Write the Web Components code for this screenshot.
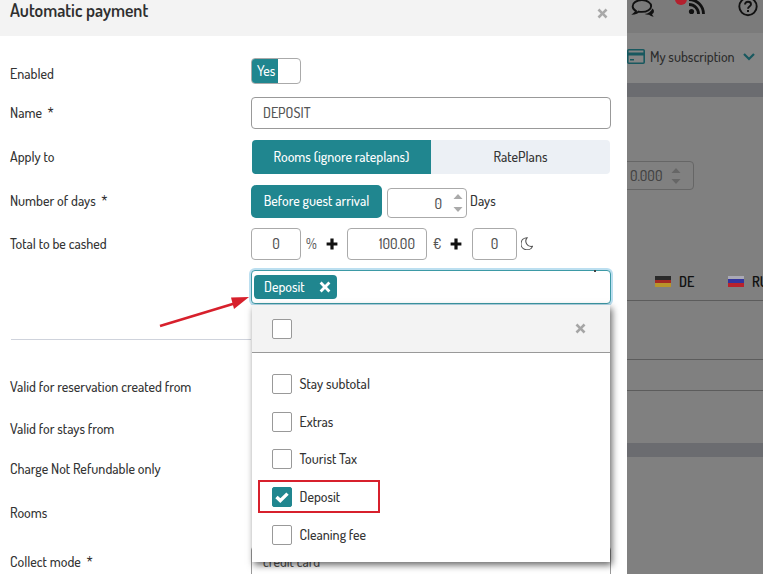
<!DOCTYPE html>
<html><head><meta charset="utf-8">
<style>
html,body{margin:0;padding:0;width:763px;height:574px;overflow:hidden}
body{font-family:"Dosis","Lato",sans-serif;font-size:14px;font-weight:500;color:#333;display:flex;background:#808080}
svg{display:block}
</style></head><body>
<pay-modal>
<pay-row style="margin-top:22px;height:24px;--lo:7px" label="Enabled"><pay-switch></pay-switch></pay-row>
<pay-row style="margin-top:15px;height:32px" label="Name" req><pay-field grow value="DEPOSIT"></pay-field></pay-row>
<pay-row style="margin-top:11px;height:34px" label="Apply to"><pay-seg></pay-seg></pay-row>
<pay-row style="margin-top:11px;height:33px" label="Number of days" req><pay-days></pay-days></pay-row>
<pay-row style="margin-top:10px;height:32px" label="Total to be cashed"><pay-total></pay-total></pay-row>
<pay-row style="margin-top:10px;height:34px"><pay-multi></pay-multi></pay-row>
<pay-rule></pay-rule>
<pay-row style="margin-top:37px;height:20px" label="Valid for reservation created from"></pay-row>
<pay-row style="margin-top:22px;height:20px" label="Valid for stays from"></pay-row>
<pay-row style="margin-top:20px;height:20px" label="Charge Not Refundable only"></pay-row>
<pay-row style="margin-top:24px;height:20px" label="Rooms"></pay-row>
<pay-row style="margin-top:23px;height:32px" label="Collect mode" req><pay-field grow value="credit card"></pay-field></pay-row>
<pay-notes></pay-notes>
</pay-modal>
<pay-back></pay-back>
<script>
function def(name,css,html){
  customElements.define(name,class extends HTMLElement{
    constructor(){super();const r=this.attachShadow({mode:'open'});
      r.innerHTML='<style>'+css+'</style>'+(typeof html==='function'?html(this):html);}
  });
}
const X='<svg viewBox="0 0 12 12" width="W" height="W"><path d="M2.6 .6 6 4 9.4 .6 11.4 2.600 8 6 11.400 9.400 9.400 11.400 6 8 2.600 11.400 .6 9.400 4 6 .6 2.600z" fill="C"/></svg>';
const xi=(w,c)=>X.replace(/W/g,w).replace('C',c);
const PLUS='<svg viewBox="0 0 12 12" width="12" height="12"><path d="M4.4 .6h3.2v3.800h3.800v3.200H7.600v3.800H4.400V7.600H.6V4.400h3.800z" fill="#111"/></svg>';

def('pay-modal',`:host{display:flex;flex-direction:column;width:627px;height:574px;flex:none;background:#fff;position:relative;overflow:hidden}
header{height:36px;flex:none;background:#f3f3f3;display:flex;justify-content:space-between;align-items:flex-start;padding:0 19px 0 10px;box-sizing:border-box}
h1{margin:0;font-size:17.700px;line-height:21px;font-weight:600;color:#2f2f2f}
span{margin-top:5px}`,
`<header><h1>Automatic payment</h1><span>${xi(11,'#a9a9a9')}</span></header><slot></slot>`);

def('pay-row',`:host{display:grid;grid-template-columns:241px 360px;padding-left:10px;align-items:center;flex:none;position:relative}
.l{white-space:pre;padding-top:var(--lo,0);padding-bottom:2px}.f{display:flex;height:100%;align-items:stretch;position:relative}`,
el=>`<div class="l">${el.getAttribute('label')||''}${el.hasAttribute('req')?'  *':''}</div><div class="f"><slot></slot></div>`);

def('pay-switch',`:host{display:flex;width:50px;box-sizing:border-box;border:1px solid #aaa;border-radius:4px;overflow:hidden;background:#fff}
b{font-weight:500;width:26px;background:#20868f;color:#fff;line-height:23px;padding-left:5px;box-sizing:border-box}`,`<b>Yes</b>`);

def('pay-field',`:host{display:flex;align-items:center;box-sizing:border-box;border:1px solid #999;border-radius:4px;padding:0 11px 2px;color:#555;background:#fff;flex:1}`,
el=>el.getAttribute('value')||'');

def('pay-seg',`:host{display:flex;flex:1;margin:0 1px;border-radius:4px;overflow:hidden;background:#ecf0f5}
div{display:flex;align-items:center;justify-content:center;padding-bottom:2px}
.a{width:179px;background:#20868f;color:#fff}.b{flex:1;color:#333}`,`<div class="a">Rooms (ignore rateplans)</div><div class="b">RatePlans</div>`);

def('pay-days',`:host{display:flex;flex:1;align-items:flex-start}
.btn{height:33px;width:131px;box-sizing:border-box;padding-bottom:2px;background:#20868f;color:#fff;border-radius:5px;display:flex;align-items:center;justify-content:center}
.n{margin:3px 0 0 5px;height:30px;width:80px;box-sizing:border-box;border:1px solid #aaa;border-radius:4px;display:flex;align-items:center;justify-content:flex-end;color:#555;padding-right:3px;gap:11px}
.d{margin:3px 0 0 3px;line-height:26px}`,
`<div class="btn">Before guest arrival</div><div class="n">0<svg width="10" height="22" viewBox="0 0 10 22"><path d="M5 2 9.500 7H.5z" fill="#aaa"/><path d="M5 20 .5 15h9z" fill="#aaa"/></svg></div><div class="d">Days</div>`);

def('pay-total',`:host{display:flex;flex:1;align-items:center;color:#555}
.i{height:32px;box-sizing:border-box;border:1px solid #aaa;border-radius:4px;display:flex;align-items:center;background:#fff;flex:none;padding-bottom:2px}
.c{justify-content:center}.r{justify-content:flex-end;padding-right:11px}
.u{flex:none;padding-bottom:2px}.p{flex:none;width:12px}`,
`<div class="i c" style="width:50px">0</div><span class="u" style="margin-left:5px;width:20px">%</span><span class="p" style="margin-right:9px">${PLUS}</span><div class="i r" style="width:80px">100.00</div><span class="u" style="margin-left:6px;width:17px">€</span><span class="p" style="margin-right:10px">${PLUS}</span><div class="i c" style="width:45px">0</div><span style="margin-left:4px"><svg width="12" height="13" viewBox="0 0 12 13"><path d="M6 .8A6 6 0 1 0 11.400 9.400 5.400 5.400 0 0 1 6 .8z" fill="none" stroke="#555" stroke-width="1.100"/></svg></span>`);

def('pay-multi',`:host{display:flex;flex:1;box-sizing:border-box;border:1px solid #3d9aa6;border-radius:4px;box-shadow:0 0 0 2px #bcdff0;background:#fff;align-items:center;padding-left:2px;position:relative}
.chip{height:24px;width:83px;box-sizing:border-box;background:#20868f;color:#fff;border-radius:4px;display:flex;align-items:center;justify-content:space-between;padding:0 6px 0 10px}
.chip span{padding-bottom:2px}
.dot{position:absolute;right:14px;top:-1px;width:2px;height:2px;background:#444}
.drop{position:absolute;left:0;top:34px;width:358px;height:257px;background:#fff;box-shadow:2px 3px 7px rgba(0,0,0,.6);display:flex;flex-direction:column;z-index:2}
.top{height:47px;flex:none;background:#f3f3f3;border-bottom:1px solid #999;display:flex;align-items:center;justify-content:space-between;padding:0 24px 0 20px}
.list{padding-top:12px}`,
`<div class="chip"><span>Deposit</span>${xi(12,'#fff')}</div><div class="dot"></div>
<div class="drop"><div class="top"><pay-check></pay-check>${xi(11,'#a5a5a5')}</div>
<div class="list"><pay-item>Stay subtotal</pay-item><pay-item>Extras</pay-item><pay-item>Tourist Tax</pay-item><pay-item checked>Deposit</pay-item><pay-item>Cleaning fee</pay-item></div></div>`);

def('pay-check',`:host{display:block;width:20px;height:20px;box-sizing:border-box;border:1px solid #999;border-radius:2px;background:#fff;flex:none}
:host([checked]){background:#20868f;border-color:#20868f}`,
el=>el.hasAttribute('checked')?`<svg width="18" height="18" viewBox="0 0 18 18"><path d="M3.500 9 7.300 12.600 14.500 5.600" fill="none" stroke="#fff" stroke-width="3.400"/></svg>`:'');

def('pay-item',`:host{display:flex;height:37.750px;align-items:center;gap:7.500px;padding-left:20px;color:#333}
span{padding-bottom:1px}`,
el=>`<pay-check ${el.hasAttribute('checked')?'checked':''}></pay-check><span><slot></slot></span>`);

def('pay-rule',`:host{display:block;flex:none;height:0;width:240px;margin:35px 0 0 11px;border-top:1px solid #cfd3dc}`,'');

def('pay-notes',`:host{position:absolute;inset:0;pointer-events:none;z-index:5;display:block}
.box{position:absolute;left:258px;top:480px;width:122px;height:33px;box-sizing:border-box;border:2.500px solid #d7202c}
svg{position:absolute;left:0;top:0}`,
`<div class="box"></div><svg width="300" height="340" viewBox="0 0 300 340"><path d="M160 326 236 303" stroke="#d7202c" stroke-width="2.600" fill="none"/><path d="M249 297 231 297.500 234 309z" fill="#d7202c"/></svg>`);

def('pay-back',`:host{display:flex;flex-direction:column;flex:1;overflow:hidden;background:#808080;color:#222}
.top{height:33px;flex:none;background:#7b7b7b;position:relative}
.top svg{position:absolute;top:-3px}
.dot{position:absolute;left:48px;top:-7px;width:12px;height:12px;border-radius:50%;background:#b3202e}
.sub{height:50px;flex:none;background:#858585;display:flex;align-items:center;gap:5px;padding-bottom:3px;box-sizing:border-box;white-space:nowrap;color:#2c2c2c}
.band{height:14px;flex:none;background:#6b6c70}
.num{margin:64px 0 0 -12px;height:29px;width:79px;box-sizing:border-box;border:1px solid #666;border-radius:4px;flex:none;display:flex;align-items:center;padding-left:14px;gap:9px;color:#444}
.flags{margin-top:61px;height:50px;flex:none;box-sizing:border-box;border-bottom:1px solid #5c5c5c;display:flex;align-items:center;padding:12px 0 0 28px;color:#111;white-space:nowrap;font-weight:600}
.flags i{display:block;width:16px;height:11px;margin-right:8px;flex:none}
.flags span{width:49px;flex:none}
.line{flex:none;border-bottom:1px solid #5c5c5c}`,
`<div class="top">
<svg style="left:4px" width="26" height="21" viewBox="0 0 24 20"><path d="M10 3C5 3 1.200 5.500 1.200 8.700c0 1.900 1.300 3.500 3.200 4.600-.3 1-.9 1.800-1.600 2.400 1.600-.2 3-.9 4-1.800 1 .2 2 .3 3.200.3 5 0 8.800-2.500 8.800-5.500S15 3 10 3z" fill="none" stroke="#111" stroke-width="1.800"/><path d="M20 11c2 1.500 2 4-.3 5.400.2.800.8 1.600 1.600 2.200-2-.1-3.400-.8-4.400-1.800-1.400.2-3 0-4.300-.6 3.400-.3 6.300-2.300 7.400-5.200z" fill="#111"/></svg>
<div class="dot"></div>
<svg style="left:61px" width="18" height="18" viewBox="0 0 18 18"><circle cx="3.500" cy="14.500" r="2.600" fill="#111"/><path d="M1 7.500A9.500 9.500 0 0 1 10.500 17" fill="none" stroke="#111" stroke-width="2.800"/><path d="M1 2.500A14.500 14.500 0 0 1 15.500 17" fill="none" stroke="#111" stroke-width="2.800"/></svg>
<svg style="left:110px" width="22" height="20" viewBox="0 0 22 20"><circle cx="11" cy="9.500" r="8.700" fill="none" stroke="#111" stroke-width="1.900"/><path d="M8 7.500c0-1.800 1.300-2.800 3-2.800s3 1 3 2.500c0 2.300-3 2.300-3 4.500" fill="none" stroke="#111" stroke-width="1.900"/><rect x="10" y="13" width="2" height="2" fill="#111"/></svg>
</div>
<div class="sub"><svg width="18" height="15" viewBox="0 0 18 15" style="flex:none"><rect x=".8" y=".8" width="16.400" height="13.400" rx="1" fill="none" stroke="#18585f" stroke-width="1.600"/><rect x="1" y="3.500" width="16" height="3" fill="#18585f"/><rect x="3" y="10" width="4" height="1.500" fill="#18585f"/></svg><span>My subscription</span><svg style="flex:none;margin-left:3px" width="12" height="9" viewBox="0 0 12 9"><path d="M1 2 6 7 11 2" fill="none" stroke="#18585f" stroke-width="2.200"/></svg></div>
<div class="band"></div>
<div class="num">0.000<svg width="10" height="22" viewBox="0 0 10 22"><path d="M5 3 9.500 8H.5z" fill="#666"/><path d="M5 19 .5 14h9z" fill="#666"/></svg></div>
<div class="flags"><i style="background:linear-gradient(#2a2a2a 33%,#a32a22 33% 66%,#b8952a 66%)"></i><span>DE</span><i style="background:linear-gradient(#a9a9b5 30%,#33349e 30% 62%,#b8222c 62%)"></i><span>RU</span></div>
<div class="line" style="height:58px"></div>
<div class="line" style="height:30px"></div>
<div style="height:52px;flex:none"></div>
<div class="band"></div>`);
</script>
</body></html>
